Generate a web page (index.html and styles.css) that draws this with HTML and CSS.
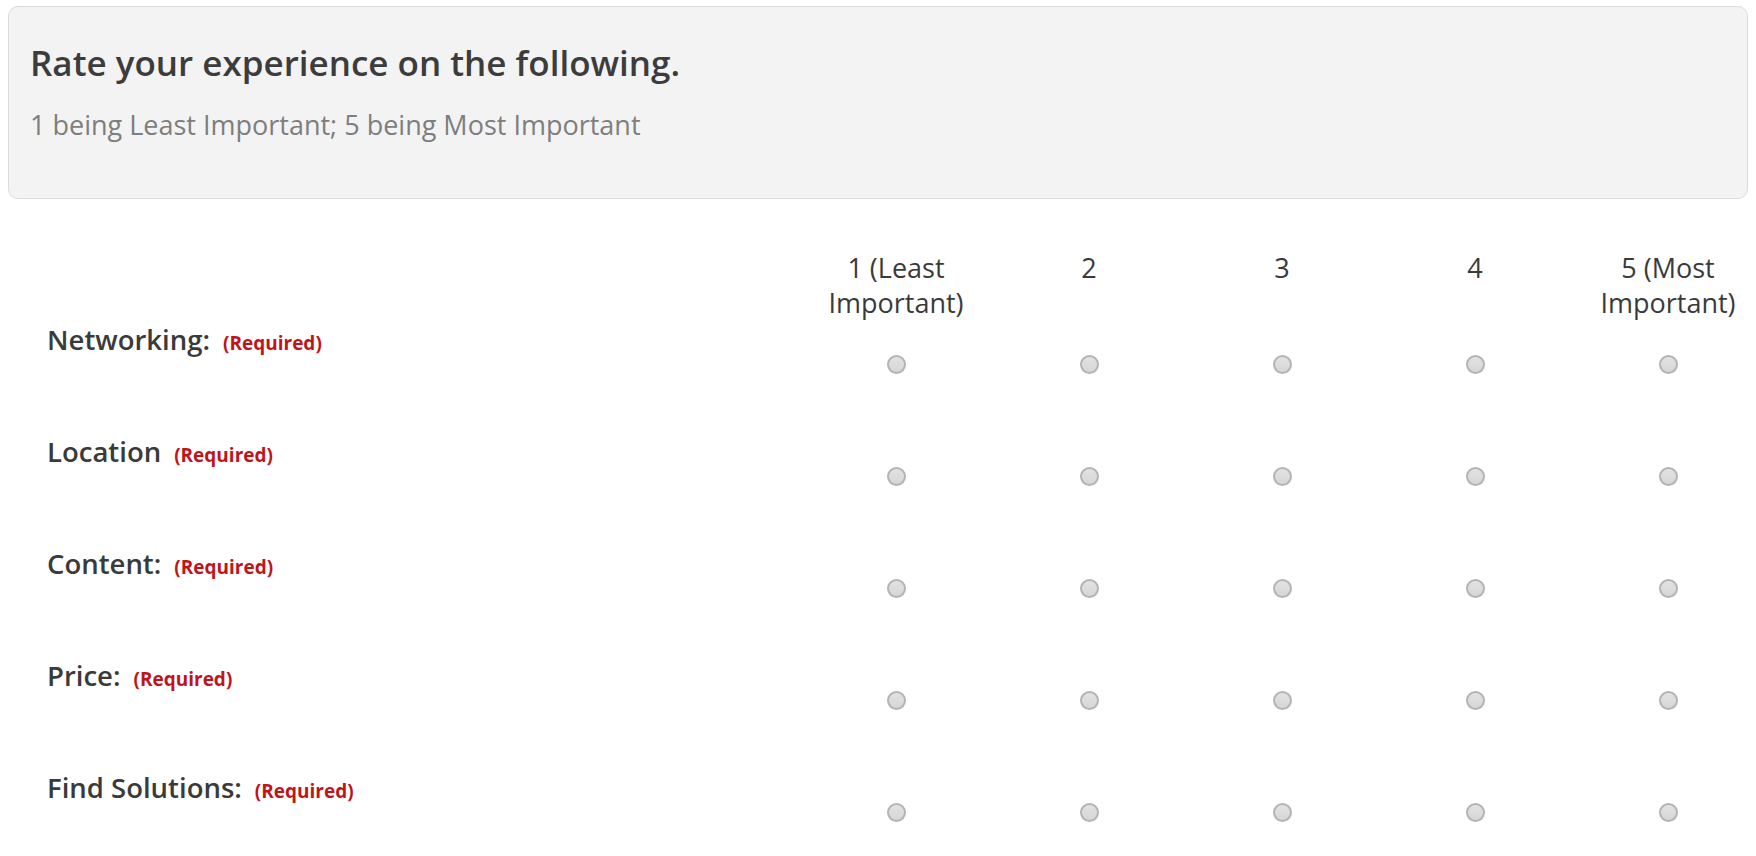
FILE: index.html
```html
<!DOCTYPE html>
<html>
<head>
<meta charset="utf-8">
<link rel="stylesheet" href="styles.css">
</head>
<body>
<div class="page">
  <div class="panel">
    <h1 class="title">Rate your experience on the following.</h1>
    <p class="subtitle">1 being Least Important; 5 being Most Important</p>
  </div>
  <div class="matrix">
    <div class="head-cell"></div>
    <div class="head-cell col">1 (Least Important)</div>
    <div class="head-cell col">2</div>
    <div class="head-cell col">3</div>
    <div class="head-cell col">4</div>
    <div class="head-cell col">5 (Most Important)</div>

    <div class="label"><span class="name">Networking:</span><span class="req">(Required)</span></div>
    <div class="cell"><span class="radio"></span></div>
    <div class="cell"><span class="radio"></span></div>
    <div class="cell"><span class="radio"></span></div>
    <div class="cell"><span class="radio"></span></div>
    <div class="cell"><span class="radio"></span></div>

    <div class="label"><span class="name">Location</span><span class="req">(Required)</span></div>
    <div class="cell"><span class="radio"></span></div>
    <div class="cell"><span class="radio"></span></div>
    <div class="cell"><span class="radio"></span></div>
    <div class="cell"><span class="radio"></span></div>
    <div class="cell"><span class="radio"></span></div>

    <div class="label"><span class="name">Content:</span><span class="req">(Required)</span></div>
    <div class="cell"><span class="radio"></span></div>
    <div class="cell"><span class="radio"></span></div>
    <div class="cell"><span class="radio"></span></div>
    <div class="cell"><span class="radio"></span></div>
    <div class="cell"><span class="radio"></span></div>

    <div class="label"><span class="name">Price:</span><span class="req">(Required)</span></div>
    <div class="cell"><span class="radio"></span></div>
    <div class="cell"><span class="radio"></span></div>
    <div class="cell"><span class="radio"></span></div>
    <div class="cell"><span class="radio"></span></div>
    <div class="cell"><span class="radio"></span></div>

    <div class="label"><span class="name">Find Solutions:</span><span class="req">(Required)</span></div>
    <div class="cell"><span class="radio"></span></div>
    <div class="cell"><span class="radio"></span></div>
    <div class="cell"><span class="radio"></span></div>
    <div class="cell"><span class="radio"></span></div>
    <div class="cell"><span class="radio"></span></div>
  </div>
</div>
</body>
</html>
```

FILE: styles.css
```css
html, body {
  margin: 0;
  padding: 0;
  background: #ffffff;
}
body {
  font-family: "Open Sans", "Liberation Sans", sans-serif;
  color: #333333;
  overflow: hidden;
}
.page {
  padding: 6px 8px 0 8px;
}
.panel {
  box-sizing: border-box;
  height: 193px;
  background: #f3f3f3;
  border: 1px solid #dcdcdc;
  border-radius: 10px;
  padding: 37px 21px 0 21px;
}
.title {
  margin: 0;
  font-size: 35px;
  line-height: 37px;
  font-weight: 600;
  color: #3c3c3c;
}
.subtitle {
  margin: 26px 0 0 0;
  font-size: 27px;
  line-height: 35px;
  color: #7e7e7e;
}
.matrix {
  display: grid;
  grid-template-columns: 742px repeat(5, 172px);
  grid-template-rows: 75px repeat(5, 112px);
  column-gap: 21px;
  margin-top: 51px;
  padding-left: 39px;
}
.head-cell {
  font-size: 27px;
  line-height: 35px;
  text-align: center;
  color: #3a3a3a;
}
.label {
  line-height: 30px;
  display: flex;
  align-items: baseline;
  gap: 13px;
}
.name {
  font-size: 27.5px;
  font-weight: 600;
  color: #3a3a3a;
}
.req {
  font-size: 19px;
  font-weight: 700;
  color: #c0141b;
}
.cell {
  display: flex;
  justify-content: center;
  padding-top: 30px;
}
.radio {
  box-sizing: border-box;
  width: 19px;
  height: 19px;
  border-radius: 50%;
  border: 2px solid #b4b4b4;
  background: linear-gradient(#e2e2e2, #d6d6d6);
}
```
